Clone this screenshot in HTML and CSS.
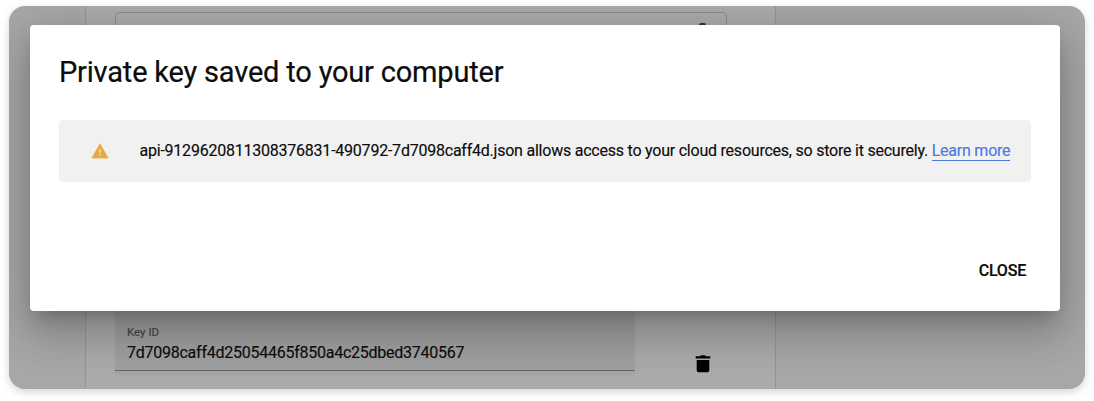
FILE: index.html
```html
<!DOCTYPE html>
<html lang="en">
<head>
<meta charset="utf-8">
<title>Private key saved to your computer</title>
<link rel="stylesheet" href="styles.css">
</head>
<body>
<div class="frame">
  <main class="panel">
    <div class="select-box"><span class="select-arrow"></span></div>
    <div class="key-row">
      <div class="field">
        <span class="field-label">Key ID</span>
        <span class="field-value">7d7098caff4d25054465f850a4c25dbed3740567</span>
      </div>
      <svg class="trash" viewBox="0 0 16 18" aria-label="Delete"><path d="M1.7 5h12.6v10.3q0 2-2 2H3.7q-2 0-2-2zM.7 1.2h4.5L6 .3h4l.8.9h4.5v2.4H.7z"/></svg>
    </div>
  </main>
  <section class="dialog" role="dialog">
    <h1 class="title">Private key saved to your computer</h1>
    <div class="notice">
      <svg class="warning" viewBox="0 0 18 16"><path class="warning-shape" d="M9 .8 17.2 15H.8z"/><path class="warning-mark" d="M8.4 6.2h1.2v3.6H8.4zM8.4 11h1.2v1.5H8.4z"/></svg>
      <p class="message">api-9129620811308376831-490792-7d7098caff4d.json allows access to your cloud resources, so store it securely. <a class="link">Learn more</a></p>
    </div>
    <div class="actions"><button class="close">CLOSE</button></div>
  </section>
</div>
</body>
</html>
```
FILE: styles.css
```css
* { box-sizing: border-box; }
body {
  margin: 0;
  padding: 6px 9px;
  height: 401px;
  overflow: hidden;
  background: #fff;
  font-family: Roboto, sans-serif;
  color: #0c0c0c;
}
.frame {
  position: relative;
  width: 1076px;
  height: 383px;
  border-radius: 16px;
  box-shadow: 0 3px 8px rgba(0, 0, 0, .17);
  background: #a7a7a7;
  display: flex;
  padding-left: 76px;
}
.panel {
  width: 690.5px;
  height: 383px;
  border: solid #959595;
  border-width: 0 1px;
  padding: 6px 0 0 29px;
  background: #aaa;
}
.select-box {
  width: 611.5px;
  height: 50px;
  border: 1px solid #8c8c8c;
  border-radius: 5px;
  display: flex;
  justify-content: flex-end;
  padding: 10px 20px 0 0;
}
.select-arrow { width: 7px; height: 4px; border-radius: 3px; background: #333; }
.key-row { display: flex; margin-top: 239px; }
.field {
  width: 519.5px;
  height: 70px;
  padding: 25px 12px 0;
  border-bottom: 1px solid #646464;
  background: #9f9f9f;
  box-shadow: 0 4px 0 #a4a4a4;
  display: flex;
  flex-direction: column;
}
.field-label { font-size: 11.5px; line-height: 13px; color: #454545; -webkit-text-stroke: .2px; }
.field-value { font-size: 16px; letter-spacing: -.25px; line-height: 19px; margin-top: 4px; white-space: nowrap; -webkit-text-stroke: .15px; }
.trash { width: 16px; height: 18px; margin: 54px 0 0 60px; }
.dialog {
  position: absolute;
  left: 21px;
  top: 18.5px;
  width: 1030px;
  height: 286.5px;
  padding: 29px;
  border-radius: 4px;
  background: #fff;
  box-shadow: 0 11px 15px -7px rgba(0, 0, 0, .2), 0 24px 38px 3px rgba(0, 0, 0, .14), 0 9px 46px 8px rgba(0, 0, 0, .12);
  clip-path: inset(-18.5px -25px -78px -21px round 16px);
}
.title { margin: 0; font-size: 29px; letter-spacing: -.19px; line-height: 37px; font-weight: 400; white-space: nowrap; -webkit-text-stroke: .2px; }
.notice {
  margin-top: 29.5px;
  width: 972px;
  height: 62px;
  border-radius: 4px;
  background: #f1f1f1;
  display: flex;
  align-items: center;
}
.warning { flex: none; width: 18px; height: 16px; margin: 0 0 0 31.5px; }
.warning-shape { fill: #e8ab43; stroke: #e8ab43; stroke-width: .7; stroke-linejoin: round; }
.warning-mark { fill: #fbedd3; }
.message { margin: 0 0 0 31px; font-size: 16px; letter-spacing: -.227px; line-height: 20px; white-space: nowrap; -webkit-text-stroke: .15px; }
.link { color: #4c78e0; border-bottom: 1px solid #4c78e0; }
.actions { display: flex; justify-content: flex-end; padding: 78px 5px 0 0; }
.close {
  border: 0;
  padding: 0;
  background: none;
  color: #0c0c0c;
  font: 500 16px/22px Roboto, sans-serif;
  letter-spacing: -.2px;
  -webkit-text-stroke: .2px;
}
```
